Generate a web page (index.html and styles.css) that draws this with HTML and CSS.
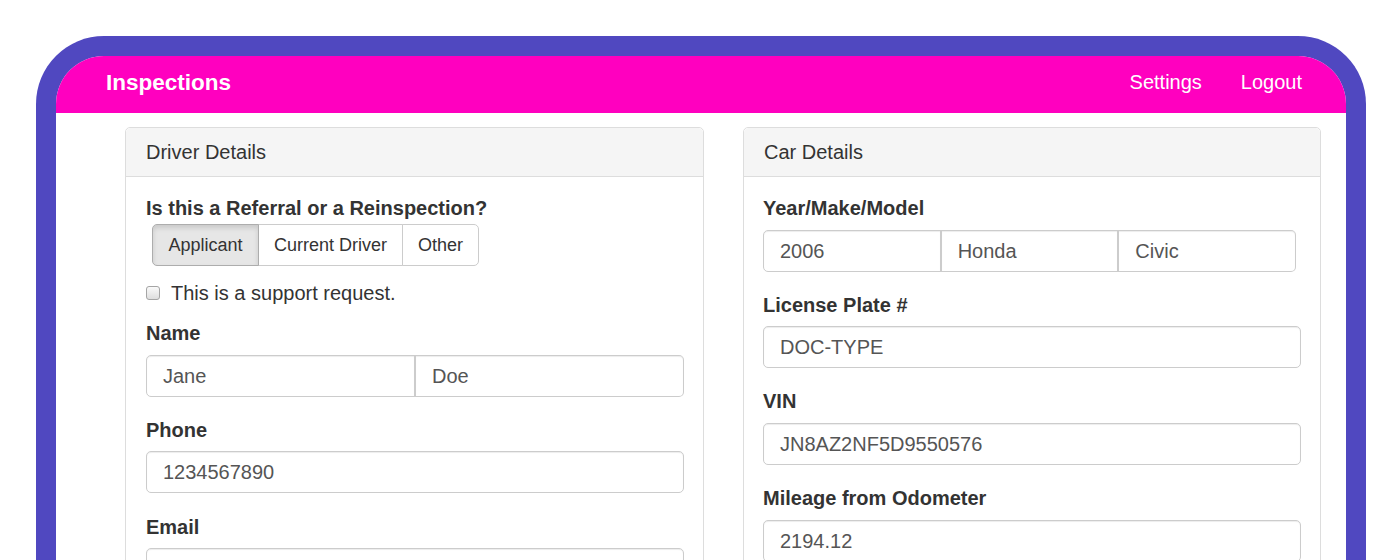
FILE: index.html
```html
<!DOCTYPE html>
<html>
<head>
<meta charset="utf-8">
<link rel="stylesheet" href="styles.css">
</head>
<body>
<div class="frame">
  <div class="screen">
    <header class="topbar">
      <div class="brand">Inspections</div>
      <nav class="nav">
        <a class="nav-link">Settings</a>
        <a class="nav-link">Logout</a>
      </nav>
    </header>
    <main class="content">
      <section class="panel panel-left">
        <div class="panel-heading">Driver Details</div>
        <div class="panel-body">
          <div class="label">Is this a Referral or a Reinspection?</div>
          <div class="btn-group">
            <span class="btn active">Applicant</span>
            <span class="btn">Current Driver</span>
            <span class="btn">Other</span>
          </div>
          <div class="check-row">
            <span class="checkbox"></span>
            <span>This is a support request.</span>
          </div>
          <div class="group">
            <div class="label">Name</div>
            <div class="input-row">
              <div class="input seg first">Jane</div>
              <div class="input seg last">Doe</div>
            </div>
          </div>
          <div class="group">
            <div class="label">Phone</div>
            <div class="input">1234567890</div>
          </div>
          <div class="group wide-gap">
            <div class="label">Email</div>
            <div class="input"></div>
          </div>
        </div>
      </section>
      <section class="panel panel-right">
        <div class="panel-heading">Car Details</div>
        <div class="panel-body">
          <div class="group">
            <div class="label">Year/Make/Model</div>
            <div class="input-row narrow">
              <div class="input seg first">2006</div>
              <div class="input seg mid">Honda</div>
              <div class="input seg last">Civic</div>
            </div>
          </div>
          <div class="group">
            <div class="label">License Plate #</div>
            <div class="input">DOC-TYPE</div>
          </div>
          <div class="group loose">
            <div class="label">VIN</div>
            <div class="input">JN8AZ2NF5D9550576</div>
          </div>
          <div class="group loose">
            <div class="label">Mileage from Odometer</div>
            <div class="input">2194.12</div>
          </div>
        </div>
      </section>
    </main>
  </div>
</div>
</body>
</html>
```

FILE: styles.css
```css
html, body {
  margin: 0;
  padding: 0;
  height: 560px;
  overflow: hidden;
  background: #ffffff;
  font-family: "Liberation Sans", Arial, sans-serif;
  color: #333333;
}

.frame {
  margin: 36px 34px 0 36px;
  padding: 20px 20px 0 20px;
  background: #5048c0;
  border-radius: 68px 68px 0 0;
  height: 700px;
}

.screen {
  background: #ffffff;
  border-radius: 48px 48px 0 0;
  overflow: hidden;
  height: 700px;
}

.topbar {
  background: #ff00bf;
  height: 57px;
  box-sizing: border-box;
  display: flex;
  align-items: center;
  justify-content: space-between;
  padding: 0 44px 4px 50px;
  color: #ffffff;
}

.brand {
  font-size: 22.5px;
  font-weight: bold;
}

.nav {
  display: flex;
  gap: 39px;
}

.nav-link {
  font-size: 20px;
  color: #ffffff;
}

.content {
  display: flex;
  gap: 39px;
  padding: 14px 0 0 69px;
}

.panel {
  border: 1px solid #dddddd;
  border-radius: 5px;
  background: #ffffff;
  box-sizing: border-box;
  height: 600px;
}

.panel-left { width: 579px; }
.panel-right { width: 578px; }

.panel-heading {
  background: #f5f5f5;
  border-bottom: 1px solid #dddddd;
  height: 48px;
  line-height: 48px;
  padding: 0 20px;
  font-size: 20px;
  border-radius: 5px 5px 0 0;
}

.panel-body {
  padding: 18px 19px 0 19px;
}

.panel-left .panel-body {
  padding-left: 20px;
}

.label {
  font-size: 20px;
  font-weight: bold;
  line-height: 26px;
  height: 26px;
}

.btn-group {
  display: flex;
  margin: 3px 0 0 6px;
  width: max-content;
}

.btn {
  display: block;
  height: 42px;
  line-height: 40px;
  box-sizing: border-box;
  border: 1px solid #cccccc;
  background: #ffffff;
  font-size: 18px;
  color: #333333;
  padding: 0;
  text-align: center;
  margin-left: -1px;
}

.btn:first-child {
  margin-left: 0;
  border-radius: 5px 0 0 5px;
}

.btn:last-child {
  border-radius: 0 5px 5px 0;
}

.btn.active {
  background: #e6e6e6;
  border-color: #adadad;
  box-shadow: inset 0 3px 5px rgba(0, 0, 0, 0.125);
  position: relative;
  width: 107px;
}

.btn-group .btn:nth-child(2) { width: 145px; }
.btn-group .btn:nth-child(3) { width: 77px; }

.check-row {
  display: flex;
  align-items: center;
  height: 34px;
  margin-top: 10px;
  font-size: 20px;
  gap: 11px;
}

.checkbox {
  width: 12px;
  height: 12px;
  border: 1px solid #a5a5a5;
  border-radius: 3px;
  background: linear-gradient(#fafafa, #dedede);
}

.group {
  margin-top: 10px;
}

.panel-right .group:first-child {
  margin-top: 0;
}

.group + .group {
  margin-top: 20px;
}

.group.wide-gap {
  margin-top: 21px;
}

.input {
  margin-top: 8px;
  height: 42px;
  line-height: 40px;
  box-sizing: border-box;
  border: 1px solid #cccccc;
  border-radius: 5px;
  box-shadow: inset 0 1px 1px rgba(0, 0, 0, 0.075);
  padding: 0 16px;
  font-size: 20px;
  color: #555555;
  width: 538px;
}

.group.loose .input {
  margin-top: 9px;
}

.input-row {
  display: flex;
  margin-top: 9px;
  width: 538px;
}

.input-row.narrow {
  width: 533px;
}

.input-row .input {
  margin-top: 0;
  flex: 1;
  width: auto;
  min-width: 0;
}

.seg.first {
  border-radius: 5px 0 0 5px;
}

.seg.mid {
  border-radius: 0;
  border-left: 2px solid #cccccc;
}

.seg.last {
  border-radius: 0 5px 5px 0;
  border-left: 2px solid #cccccc;
}

.input-row .seg + .seg {
  margin-left: -1px;
}
```
